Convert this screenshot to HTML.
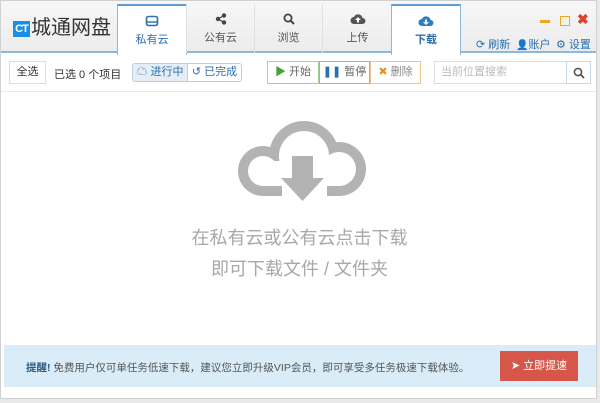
<!DOCTYPE html>
<html><head><meta charset="utf-8"><style>
*{margin:0;padding:0;box-sizing:border-box}
body{width:600px;height:403px;background:#e9e9e9;font-family:"Liberation Sans","Noto Sans CJK SC",sans-serif;font-size:11px;color:#333;position:relative;overflow:hidden}
.win{position:absolute;left:0;top:0;width:597px;height:399px;background:#fff;border:1px solid #d0d0d0}
.hdr{position:absolute;left:0;top:0;width:595px;height:52px;background:linear-gradient(#f7f7f7,#ececec);border-bottom:2px solid #8cb8dc}
.abs{position:absolute}
.tab{position:absolute;top:3px;height:49px;border-left:1px solid #e0e0e0;text-align:center;color:#555;font-size:11px}
.tab.on{background:#fff;border-top:2px solid #5b9fd6;border-left:1px solid #8cb8dc;border-right:1px solid #8cb8dc;height:51px;color:#2a6fb0}
.tab svg{display:block;margin:9px auto 4px}
.btn{position:absolute;height:23px;border:1px solid #ddd;background:#fff;font-size:11px;line-height:21px;text-align:center}
</style></head><body>
<div class="win">
<div class="hdr">
 <div class="abs" style="left:12px;top:20px;width:17px;height:16px;background:#1d8fe1;color:#fff;font-size:11px;font-weight:bold;line-height:16px;text-align:center;letter-spacing:-1px">CT</div>
 <div class="abs" style="left:30px;top:14px;font-size:20px;color:#333;line-height:26px">城通网盘</div>
 <div class="tab on" style="left:116px;width:70px;top:3px"><svg width="14" height="12" viewBox="0 0 14 12"><rect x="1.5" y="1.5" width="11" height="9" rx="2" fill="none" stroke="#2a6fb0" stroke-width="1.6"/><line x1="2" y1="7" x2="12" y2="7" stroke="#2a6fb0" stroke-width="1.4"/></svg>私有云</div>
 <div class="tab" style="left:185px;width:68px"><svg width="12" height="12" viewBox="0 0 12 12"><circle cx="3" cy="6" r="2.2" fill="#444"/><circle cx="9" cy="2.5" r="2.2" fill="#444"/><circle cx="9" cy="9.5" r="2.2" fill="#444"/><path d="M3 6L9 2.5M3 6L9 9.5" stroke="#444" stroke-width="1.3"/></svg>公有云</div>
 <div class="tab" style="left:253px;width:68px"><svg width="12" height="12" viewBox="0 0 12 12"><circle cx="5" cy="5" r="3.6" fill="none" stroke="#444" stroke-width="1.8"/><path d="M7.5 7.5L11 11" stroke="#444" stroke-width="2"/></svg>浏览</div>
 <div class="tab" style="left:321px;width:70px"><svg width="16" height="12" viewBox="0 0 16 12"><path d="M4 11a3.5 3.5 0 0 1 0-7 4.5 4.5 0 0 1 8.5 1 3 3 0 0 1 0 6z" fill="#555"/><path d="M8 4l-3 3h2v2.5h2V7h2z" fill="#fff"/></svg>上传</div>
 <div class="tab on" style="left:390px;width:70px;font-weight:bold"><svg width="16" height="12" viewBox="0 0 16 12"><path d="M4 11a3.5 3.5 0 0 1 0-7 4.5 4.5 0 0 1 8.5 1 3 3 0 0 1 0 6z" fill="#2a7fc4"/><path d="M8 10l-3-3h2V4.5h2V7h2z" fill="#fff"/></svg>下载</div>
 <div class="abs" style="left:539px;top:19px;width:10px;height:3px;background:#f3a51b"></div>
 <div class="abs" style="left:559px;top:15px;width:10px;height:10px;border:1.5px solid #f3a51b"></div>
 <div class="abs" style="left:576px;top:10px;color:#e0402a;font-size:14px;font-weight:bold">✖</div>
 <div class="abs" style="left:475px;top:35px;color:#2a6fb0;font-size:11px">⟳ 刷新</div>
 <div class="abs" style="left:515px;top:35px;color:#2a6fb0;font-size:11px"><span style="font-size:10px">👤</span>账户</div>
 <div class="abs" style="left:555px;top:35px;color:#2a6fb0;font-size:11px">⚙ 设置</div>
</div>
<div class="btn" style="left:8px;top:60px;width:37px">全选</div>
<div class="abs" style="left:53px;top:65px">已选 0 个项目</div>
<div class="btn" style="left:131px;top:62px;width:56px;height:19px;line-height:17px;border-color:#b9cfe3;background:#e5eef7;color:#2a6fb0;border-radius:3px 0 0 3px">☁ 进行中</div>
<div class="btn" style="left:186px;top:62px;width:55px;height:19px;line-height:17px;border-color:#b9cfe3;color:#2a6fb0;border-radius:0 3px 3px 0">↺ 已完成</div>
<div class="btn" style="left:266px;top:60px;width:52px;border-color:#a8d29a;color:#4aa03a">▶ <span style="color:#666">开始</span></div>
<div class="btn" style="left:318px;top:60px;width:51px;border-color:#8ab4d9;color:#2a6fb0">❚❚ <span style="color:#666">暂停</span></div>
<div class="btn" style="left:369px;top:60px;width:51px;border-color:#f0c48a;color:#e89223">✖ <span style="color:#888">删除</span></div>
<div class="btn" style="left:433px;top:60px;width:133px;text-align:left;padding-left:6px;color:#bbb">当前位置搜索</div>
<div class="btn" style="left:565px;top:60px;width:25px;border-color:#c8d8e8"><svg width="12" height="12" viewBox="0 0 12 12" style="margin-top:5px"><circle cx="5" cy="5" r="3.6" fill="none" stroke="#555" stroke-width="1.6"/><path d="M7.5 7.5L11 11" stroke="#555" stroke-width="1.8"/></svg></div>
<div class="abs" style="left:0;top:90px;width:595px;height:1px;background:#eaeaea"></div>
<svg class="abs" style="left:0;top:0" width="597" height="340">
 <g fill="#b3b3b3"><circle cx="262" cy="170" r="25"/><circle cx="303" cy="155" r="35"/><circle cx="338" cy="168" r="27"/><rect x="262" y="160" width="76" height="35"/></g>
 <g fill="#fff"><circle cx="262" cy="170" r="15"/><circle cx="303" cy="155" r="25"/><circle cx="338" cy="168" r="17"/><rect x="262" y="160" width="76" height="25"/><rect x="281" y="178" width="45" height="22"/></g>
 <rect x="291" y="155" width="21" height="24" fill="#b3b3b3"/>
 <path d="M280 177h43l-21.5 23z" fill="#b3b3b3"/>
</svg>
<div class="abs" style="left:0;width:597px;top:223px;text-align:center;font-size:18px;color:#a8a8a8">在私有云或公有云点击下载</div>
<div class="abs" style="left:0;width:597px;top:254px;text-align:center;font-size:18px;color:#a8a8a8">即可下载文件 / 文件夹</div>
<div class="abs" style="left:3px;top:344px;width:592px;height:42px;background:#d9ecf7"></div>
<div class="abs" style="left:25px;top:359px;font-size:10.5px;color:#555"><b style="color:#2c5a85">提醒!</b> 免费用户仅可单任务低速下载，建议您立即升级VIP会员，即可享受多任务极速下载体验。</div>
<div class="abs" style="left:499px;top:350px;width:78px;height:30px;background:#d6574a;color:#fff;text-align:center;line-height:30px;font-size:11px">➤ 立即提速</div>
</div>
</body></html>
